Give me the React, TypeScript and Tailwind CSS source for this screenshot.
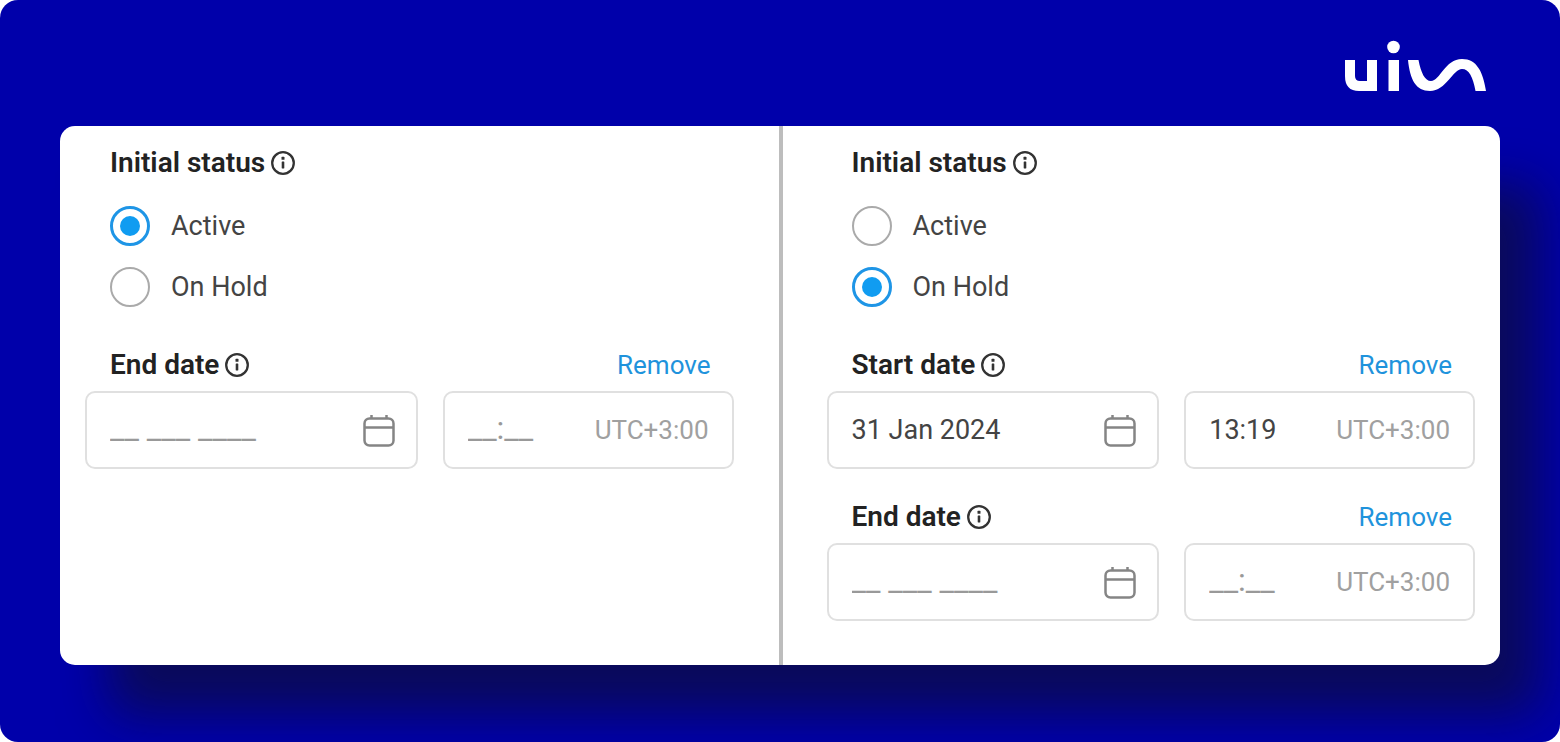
import { useId, useState } from "react";

type Status = "active" | "hold";

function Logo() {
  return (
    <svg
      viewBox="15 10 142 52"
      className="h-[52px] w-[142px] fill-white"
      role="img"
      aria-label="uin"
    >
      <path d="M15 30H25V46Q25 51 30 51H37V30H47V61H29Q15 61 15 46Z" />
      <rect x="58.5" y="30" width="10.5" height="31" />
      <circle cx="63.5" cy="17" r="6.3" />
      <path d="M78 30H88.500C91 43 95 51 101 51C110 51 115 29 132 29C147 29 153 42 156 61H145.500C143 47 139 39 132 39C123 39 116 61 100 61C86 61 80 50 78 30Z" />
    </svg>
  );
}

function InfoIcon() {
  return (
    <svg viewBox="0 0 24 24" className="size-6 shrink-0 text-[#333]" fill="none" aria-hidden="true">
      <circle cx="12" cy="12" r="10.8" stroke="currentColor" strokeWidth="2.3" />
      <rect x="10.5" y="5.8" width="3" height="3" rx="0.6" fill="currentColor" />
      <rect x="10.7" y="10.5" width="2.6" height="7" rx="0.4" fill="currentColor" />
    </svg>
  );
}

function CalendarIcon() {
  return (
    <svg viewBox="0 0 32 34" className="h-[34px] w-8" fill="none" stroke="#858585" strokeWidth="2.5" aria-hidden="true">
      <rect x="1.5" y="5.5" width="29" height="27" rx="5" />
      <path d="M1.5 14.500H30.500M8.500 2V5.500M23.500 2V5.500" />
    </svg>
  );
}

function Radio({
  name,
  label,
  checked,
  onSelect,
}: {
  name: string;
  label: string;
  checked: boolean;
  onSelect: () => void;
}) {
  return (
    <label className="flex h-10 cursor-pointer items-center gap-[21px] text-[27px] text-[#444]">
      <input
        type="radio"
        name={name}
        checked={checked}
        onChange={onSelect}
        className="grid size-10 appearance-none place-content-center rounded-full border-2 border-[#aaa] bg-white before:size-5 before:rounded-full before:content-[''] checked:border-3 checked:border-[#1e95e6] checked:before:bg-[#109cf1]"
      />
      {label}
    </label>
  );
}

function DateField({
  label,
  date = "",
  time = "",
}: {
  label: string;
  date?: string;
  time?: string;
}) {
  const id = useId();

  return (
    <div>
      <div className="flex h-7 items-center justify-between pr-[23px] pl-[25px]">
        <div className="flex items-center gap-1.5">
          <label htmlFor={id} className="text-[28px] font-semibold text-[#222]">
            {label}
          </label>
          <InfoIcon />
        </div>
        <button type="button" className="cursor-pointer text-[#1f93dc]">
          Remove
        </button>
      </div>
      <div className="mt-3 grid grid-cols-[333fr_291fr] gap-[25px]">
        <div className="flex h-[78px] items-center rounded-[10px] border-2 border-[#e0e0e0] pr-[21px] pl-[23px]">
          <input
            id={id}
            type="text"
            defaultValue={date}
            placeholder="__ ___ ____"
            className="w-full min-w-0 flex-1 text-[27px] text-[#444] outline-none placeholder:text-[#999] placeholder-shown:pb-1 placeholder-shown:text-[32px]"
          />
          <button type="button" aria-label="Open calendar" className="cursor-pointer">
            <CalendarIcon />
          </button>
        </div>
        <div className="flex h-[78px] items-center rounded-[10px] border-2 border-[#e0e0e0] px-[23px]">
          <input
            type="text"
            aria-label={`${label} time`}
            defaultValue={time}
            placeholder="__:__"
            className="w-full min-w-0 flex-1 text-[27px] text-[#444] outline-none placeholder:text-[#999] placeholder-shown:pb-1 placeholder-shown:text-[32px]"
          />
          <span className="text-[#a0a0a0]">UTC+3:00</span>
        </div>
      </div>
    </div>
  );
}

function StatusForm({
  initial,
  className,
  children,
}: {
  initial: Status;
  className: string;
  children: React.ReactNode;
}) {
  const [status, setStatus] = useState<Status>(initial);
  const name = useId();

  return (
    <form className={`min-w-0 flex-1 pt-[23px] pb-11 ${className}`}>
      <fieldset className="px-[25px]">
        <legend className="flex h-7 items-center gap-1.5 text-[28px] leading-7 font-semibold text-[#222]">
          Initial status
          <InfoIcon />
        </legend>
        <div className="mt-[29px] flex flex-col items-start gap-[21px]">
          <Radio
            name={name}
            label="Active"
            checked={status === "active"}
            onSelect={() => setStatus("active")}
          />
          <Radio
            name={name}
            label="On Hold"
            checked={status === "hold"}
            onSelect={() => setStatus("hold")}
          />
        </div>
      </fieldset>
      <div className="mt-11 flex flex-col gap-[34px]">{children}</div>
    </form>
  );
}

export default function App() {
  return (
    <div className="overflow-hidden rounded-[18px] bg-[#0000aa] px-[60px] pb-[77px] font-['Roboto',sans-serif] text-[26px] leading-7">
      <header className="flex h-[126px] justify-end pt-10 pr-[13px]">
        <Logo />
      </header>
      <main className="flex overflow-hidden rounded-[15px] bg-white shadow-[44px_54px_50px_-6px_#0a0a5a]">
        <StatusForm initial="active" className="pr-[45px] pl-[25px]">
          <DateField label="End date" />
        </StatusForm>
        <div className="w-1 bg-[#bdbdbd]" />
        <StatusForm initial="hold" className="pr-[25px] pl-11">
          <DateField label="Start date" date="31 Jan 2024" time="13:19" />
          <DateField label="End date" />
        </StatusForm>
      </main>
    </div>
  );
}
